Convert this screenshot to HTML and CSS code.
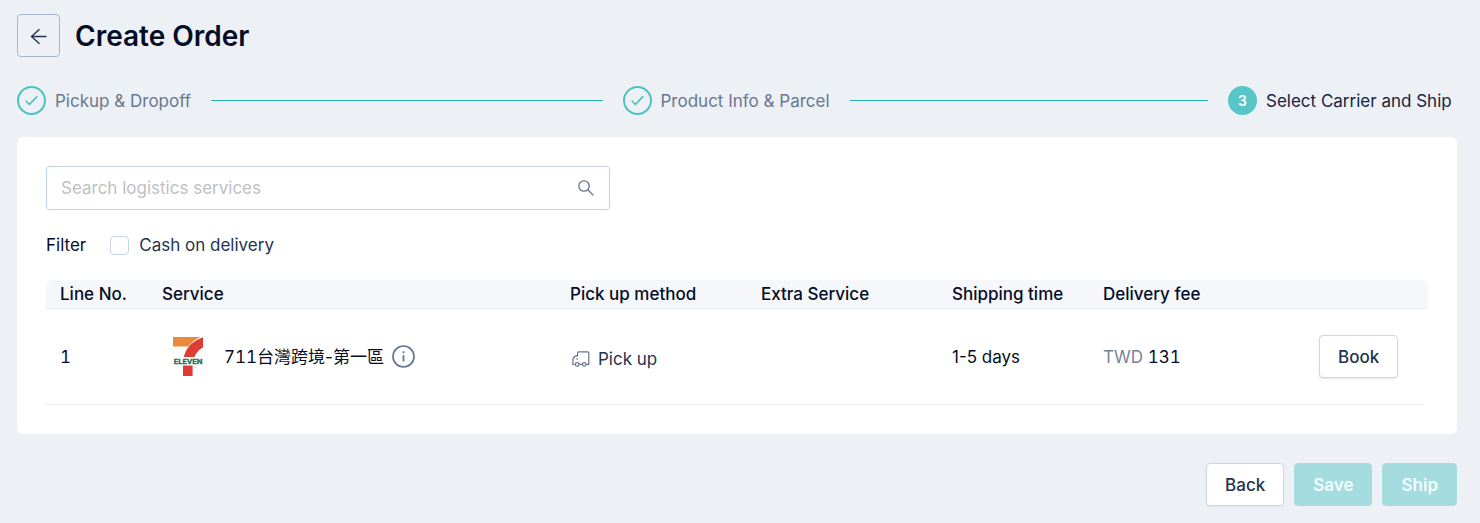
FILE: index.html
```html
<!DOCTYPE html>
<html lang="en">
<head>
<meta charset="utf-8">
<meta name="viewport" content="width=device-width, initial-scale=1">
<title>Create Order</title>
<link rel="stylesheet" href="styles.css">
</head>
<body>
<main class="page">
  <header class="page-header">
    <button class="back-button" type="button" aria-label="Go back">
      <svg width="18" height="18" viewBox="0 0 18 18" fill="none" stroke="currentColor" stroke-width="1.4"><path d="M16.500 9.500H1.500M9.500 2.300 1.500 9.500l8 7.300"/></svg>
    </button>
    <h1 class="page-title">Create Order</h1>
  </header>

  <ol class="steps">
    <li class="step">
      <span class="step-icon"><svg width="13" height="11" viewBox="0 0 13 11" fill="none" stroke="currentColor" stroke-width="1.3"><path d="M.7 5.6 4.4 9.5 12.3 1.2"/></svg></span>
      <span class="step-label">Pickup &amp; Dropoff</span>
      <span class="step-line"></span>
    </li>
    <li class="step">
      <span class="step-icon"><svg width="13" height="11" viewBox="0 0 13 11" fill="none" stroke="currentColor" stroke-width="1.3"><path d="M.7 5.6 4.4 9.5 12.3 1.2"/></svg></span>
      <span class="step-label">Product Info &amp; Parcel</span>
      <span class="step-line"></span>
    </li>
    <li class="step step-current" aria-current="step">
      <span class="step-icon">3</span>
      <span class="step-label">Select Carrier and Ship</span>
    </li>
  </ol>

  <section class="card">
    <div class="search">
      <input class="search-input" type="text" aria-label="Search logistics services" placeholder="Search logistics services">
      <svg class="search-icon" width="16" height="16" viewBox="0 0 16 16" fill="none" stroke="currentColor" stroke-width="1.3"><circle cx="6" cy="6" r="5.2"/><path d="m9.8 9.8 5.6 5.6"/></svg>
    </div>

    <div class="filter">
      <span class="filter-title">Filter</span>
      <label class="filter-option" for="cod"><input class="checkbox" type="checkbox" id="cod">Cash on delivery</label>
    </div>

    <table class="services">
      <colgroup>
        <col class="col-line"><col><col class="col-method"><col class="col-extra"><col class="col-time"><col class="col-fee"><col class="col-action"><col class="col-gutter">
      </colgroup>
      <thead>
        <tr><th>Line No.</th><th>Service</th><th>Pick up method</th><th>Extra Service</th><th>Shipping time</th><th>Delivery fee</th><th></th><th></th></tr>
      </thead>
      <tbody>
        <tr>
          <td class="number">1</td>
          <td>
            <div class="service">
              <svg class="service-logo" width="30" height="40" viewBox="0 0 30 40" role="img" aria-label="7-Eleven">
                <path fill="#e98b3a" d="M0 0h27.500Q20 3.200 15.600 9.600H0z"/>
                <path fill="#de3c32" d="M30 .3V10.200Q21 15 19.600 27V39H10V27Q10.500 7 30 .3z"/>
                <path fill="#fff" d="M0 20h30v8.500H0z"/>
                <text x="15" y="27.300" text-anchor="middle" class="logo-text">ELEVEN</text>
                <circle cx="22.200" cy="30.500" r=".6" fill="#83ae9c"/>
              </svg>
              <span><span class="number">711</span>台灣跨境-第一區</span>
              <svg class="info-icon" width="23" height="23" viewBox="0 0 23 23" fill="none" stroke="currentColor"><circle cx="11.500" cy="11.500" r="10.500" stroke-width="1.700"/><path stroke-width="1.800" d="M11.500 10.200v6.300M11.500 6.200v2"/></svg>
            </div>
          </td>
          <td>
            <div class="method">
              <svg width="18" height="16" viewBox="0 0 18 16" fill="none" stroke="currentColor" stroke-width="1.200"><path d="M2.600 13.400H.9V8.800Q.9 5.500 5.600 4.100V2Q5.600.9 6.700.9H15.600Q16.800.9 16.800 2.100V13.400H14.200M7.200 13.400H10.300M5.600 4.100V5.500M3.900 8H6"/><circle cx="5.200" cy="13.400" r="1.800"/><circle cx="12.200" cy="13.400" r="1.800"/></svg>
              <span>Pick up</span>
            </div>
          </td>
          <td></td>
          <td>1-5 days</td>
          <td><span class="currency">TWD</span> <span class="number">131</span></td>
          <td class="action"><button class="button" type="button">Book</button></td>
          <td></td>
        </tr>
      </tbody>
    </table>
  </section>

  <footer class="actions">
    <button class="button" type="button">Back</button>
    <button class="button button-primary" type="button" disabled>Save</button>
    <button class="button button-primary" type="button" disabled>Ship</button>
  </footer>
</main>
</body>
</html>
```
FILE: styles.css
```css
* { box-sizing: border-box; }

body {
  margin: 0;
  background: #edf0f5;
  color: #050d26;
  font-family: Inter, "Noto Sans CJK TC", sans-serif;
  font-size: 17px;
  line-height: 24px;
}

button, input { font: inherit; }

.number { font-variant-numeric: tabular-nums; }

.page { padding: 14px 23px 16px 17px; }

.page-header {
  display: flex;
  align-items: center;
  gap: 15px;
}

.back-button {
  display: flex;
  align-items: center;
  justify-content: center;
  width: 43px;
  height: 43px;
  padding: 0;
  border: 1px solid #a9b5cc;
  border-radius: 4px;
  background: transparent;
  color: #223354;
}

.page-title {
  margin: 0;
  font-size: 28px;
  font-weight: 600;
  line-height: 40px;
}

.steps {
  display: flex;
  gap: 20px;
  margin: 29px 0 22px;
  padding: 0;
  list-style: none;
}

.step {
  display: flex;
  flex: 1 1 0;
  align-items: center;
  color: #69778f;
  white-space: nowrap;
}

.step-icon {
  display: flex;
  align-items: center;
  justify-content: center;
  width: 29px;
  height: 29px;
  margin-right: 9px;
  border: 2px solid #4bc4c1;
  border-radius: 50%;
  color: #36bbb8;
}

.step-line {
  flex: 1;
  height: 1px;
  margin-left: 20px;
  background: #27b2b0;
}

.step-current {
  flex: 0 0 229px;
  color: #162443;
}

.step-current .step-icon {
  background: #58c5c7;
  border-color: #58c5c7;
  color: #fff;
  font-size: 14px;
  font-weight: 600;
}

.card {
  padding: 29px;
  border-radius: 6px;
  background: #fff;
}

.search {
  display: flex;
  align-items: center;
  width: 100%;
  max-width: 564px;
  height: 44px;
  padding: 0 15px 0 14px;
  border: 1px solid #c2d2e5;
  border-radius: 4px;
}

.search-input {
  flex: 1;
  min-width: 0;
  padding: 0;
  border: 0;
  outline: 0;
  background: transparent;
}

.search-input::placeholder { color: #bfbfbf; }

.search-icon { color: #66758f; }

.filter {
  display: flex;
  align-items: center;
  gap: 24px;
  margin: 23px 0;
}

.filter-option {
  display: flex;
  align-items: center;
  gap: 10px;
  color: #233352;
}

.checkbox {
  appearance: none;
  width: 19px;
  height: 19px;
  margin: 0;
  border: 1px solid #c5d5e8;
  border-radius: 4px;
}

.services {
  width: 100%;
  table-layout: fixed;
  border-collapse: separate;
  border-spacing: 0;
  text-align: left;
}

.col-line { width: 102px; }
.col-method, .col-extra { width: 191px; }
.col-time { width: 151px; }
.col-fee { width: 203px; }
.col-action { width: 130px; }
.col-gutter { width: 6px; }

.services th {
  height: 29px;
  padding: 0 0 0 14px;
  border-bottom: 1px solid #e9edf4;
  background: #f6f7fb;
  font-weight: 500;
  white-space: nowrap;
}

.services th:first-child { border-top-left-radius: 6px; }
.services th:last-child { padding: 0; border-top-right-radius: 6px; }

.services td {
  height: 96px;
  padding: 0 0 0 14px;
  border-bottom: 1px solid #e9edf4;
  white-space: nowrap;
}

.services td:last-child { padding: 0; border-bottom: 0; }

.services .action { padding-left: 27px; }

.service {
  display: flex;
  align-items: center;
}

.service-logo { margin: 0 21px 0 11px; }

.logo-text {
  fill: #27765a;
  font: 700 8px Roboto, sans-serif;
  stroke: #27765a;
  stroke-width: .4px;
}

.info-icon {
  margin-left: 8px;
  color: #66758f;
}

.method {
  display: flex;
  align-items: center;
  gap: 8px;
  padding: 5px 0 0 2px;
  color: #233352;
}

.method svg { color: #66758f; }

.currency { color: #75839a; }

.button {
  height: 43px;
  padding: 0 18px;
  border: 1px solid #cbd7e7;
  border-radius: 4px;
  background: #fff;
  color: #233352;
  font-weight: 500;
  box-shadow: 0 1px 2px #dfe6ef;
}

.button-primary {
  border-color: #a4dcdf;
  background: #a4dcdf;
  color: #f4fcfc;
  font-weight: 600;
  box-shadow: none;
}

.actions {
  display: flex;
  justify-content: flex-end;
  gap: 10px;
  margin-top: 29px;
}
```
